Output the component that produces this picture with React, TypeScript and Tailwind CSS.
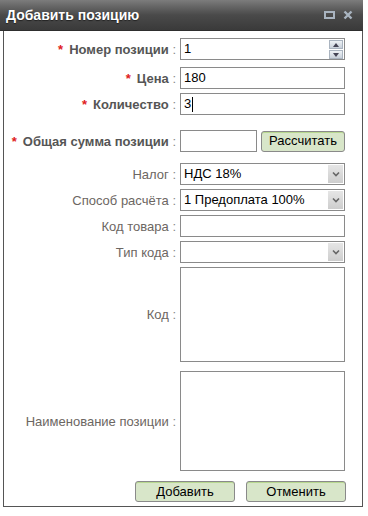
import React from 'react';

const font = { fontFamily: '"Liberation Sans", Arial, sans-serif' };

const Label: React.FC<{ text: string; required?: boolean; bold?: boolean }> = ({ text, required, bold }) => (
    <div className={`w-[176px] shrink-0 pr-[4px] text-right text-[13px] leading-none ${bold ? 'font-bold text-[#555]' : 'text-[#6c6662]'}`}>
        {required && <span className="text-[#e02020] font-bold mr-[6px]">*</span>}
        {text} <span className="font-normal text-[#888]">:</span>
    </div>
);

const Arrow: React.FC = () => (
    <div className="absolute right-[1px] top-[1px] bottom-[1px] w-[15px] bg-gradient-to-b from-[#e6e6e6] to-[#cdcdcd] flex items-center justify-center">
        <svg width="8" height="6" viewBox="0 0 8 6">
            <path d="M1 1.5 L4 4.5 L7 1.5" stroke="#666" strokeWidth="1.6" fill="none" />
        </svg>
    </div>
);

const Button: React.FC<{ text: string; w: string }> = ({ text, w }) => (
    <div className={`${w} h-[21px] flex items-center justify-center rounded-[3px] border border-[#8a8a8a] bg-[#d8e6c9] text-[13px] text-black shadow-[inset_0_1px_0_#b8d890]`}>
        {text}
    </div>
);

export default function App() {
    return (
        <div className="w-[368px] h-[516px] bg-white relative" style={font}>
            <div className="w-[363px]">
                <div className="h-[31px] flex items-center justify-between pl-[6px] pr-[10px] bg-gradient-to-b from-[#7c7c7c] via-[#4a4a4a] to-[#3a3a3a] border-b border-[#2e2e2e]">
                    <div className="text-white font-bold text-[14px] [text-shadow:0_1px_1px_#222]">Добавить позицию</div>
                    <div className="flex items-center gap-[8px]">
                        <div className="w-[11px] h-[8px] border-2 border-[#a9b4c0]" />
                        <svg width="10" height="10" viewBox="0 0 10 10">
                            <path d="M1.5 1.5 L8.5 8.5 M8.5 1.5 L1.5 8.5" stroke="#a9b4c0" strokeWidth="2.4" />
                        </svg>
                    </div>
                </div>
                <div className="ml-[3px] w-[360px] h-[476px] border-l border-r border-b border-[#555] bg-white pt-[7px]">
                    <div className="flex flex-col">
                        <div className="flex items-center h-[22px]">
                            <Label text="Номер позиции" required bold />
                            <div className="relative w-[165px] h-[22px] border border-[#8a8a8a] text-[13px] flex items-center pl-[3px]">
                                1
                                <div className="absolute right-[1px] top-[1px] flex flex-col gap-[1px]">
                                    <div className="w-[14px] h-[9px] bg-gradient-to-b from-[#eef2f6] to-[#c8d0da] border border-[#aab4c0] flex items-center justify-center">
                                        <svg width="6" height="4" viewBox="0 0 6 4"><path d="M0 4 L3 0 L6 4 Z" fill="#445" /></svg>
                                    </div>
                                    <div className="w-[14px] h-[9px] bg-gradient-to-b from-[#eef2f6] to-[#c8d0da] border border-[#aab4c0] flex items-center justify-center">
                                        <svg width="6" height="4" viewBox="0 0 6 4"><path d="M0 0 L3 4 L6 0 Z" fill="#445" /></svg>
                                    </div>
                                </div>
                            </div>
                        </div>
                        <div className="flex items-center h-[22px] mt-[7px]">
                            <Label text="Цена" required bold />
                            <div className="w-[165px] h-[22px] border border-[#8a8a8a] text-[13px] flex items-center pl-[3px]">180</div>
                        </div>
                        <div className="flex items-center h-[22px] mt-[4px]">
                            <Label text="Количество" required bold />
                            <div className="w-[165px] h-[22px] border border-[#8a8a8a] text-[13px] flex items-center pl-[3px]">
                                3<span className="w-[1px] h-[15px] bg-black ml-[1px]" />
                            </div>
                        </div>
                        <div className="flex items-center h-[22px] mt-[15px]">
                            <Label text="Общая сумма позиции" required bold />
                            <div className="w-[77px] h-[22px] border border-[#8a8a8a]" />
                            <div className="ml-[4px]"><Button text="Рассчитать" w="w-[84px]" /></div>
                        </div>
                        <div className="flex items-center h-[22px] mt-[11px]">
                            <Label text="Налог" />
                            <div className="relative w-[165px] h-[22px] border border-[#8a8a8a] text-[13px] flex items-center pl-[3px]">
                                НДС 18%
                                <Arrow />
                            </div>
                        </div>
                        <div className="flex items-center h-[22px] mt-[4px]">
                            <Label text="Способ расчёта" />
                            <div className="relative w-[165px] h-[22px] border border-[#8a8a8a] text-[13px] flex items-center pl-[3px]">
                                1 Предоплата 100%
                                <Arrow />
                            </div>
                        </div>
                        <div className="flex items-center h-[22px] mt-[4px]">
                            <Label text="Код товара" />
                            <div className="w-[165px] h-[22px] border border-[#8a8a8a]" />
                        </div>
                        <div className="flex items-center h-[22px] mt-[4px]">
                            <Label text="Тип кода" />
                            <div className="relative w-[165px] h-[22px] border border-[#8a8a8a]">
                                <Arrow />
                            </div>
                        </div>
                        <div className="flex items-center h-[95px] mt-[4px]">
                            <Label text="Код" />
                            <div className="w-[165px] h-[95px] border border-[#8a8a8a]" />
                        </div>
                        <div className="flex items-center h-[100px] mt-[9px]">
                            <Label text="Наименование позиции" />
                            <div className="w-[165px] h-[100px] border border-[#8a8a8a]" />
                        </div>
                        <div className="flex justify-end gap-[11px] pr-[16px] mt-[10px]">
                            <Button text="Добавить" w="w-[100px]" />
                            <Button text="Отменить" w="w-[100px]" />
                        </div>
                    </div>
                </div>
            </div>
        </div>
    );
}
